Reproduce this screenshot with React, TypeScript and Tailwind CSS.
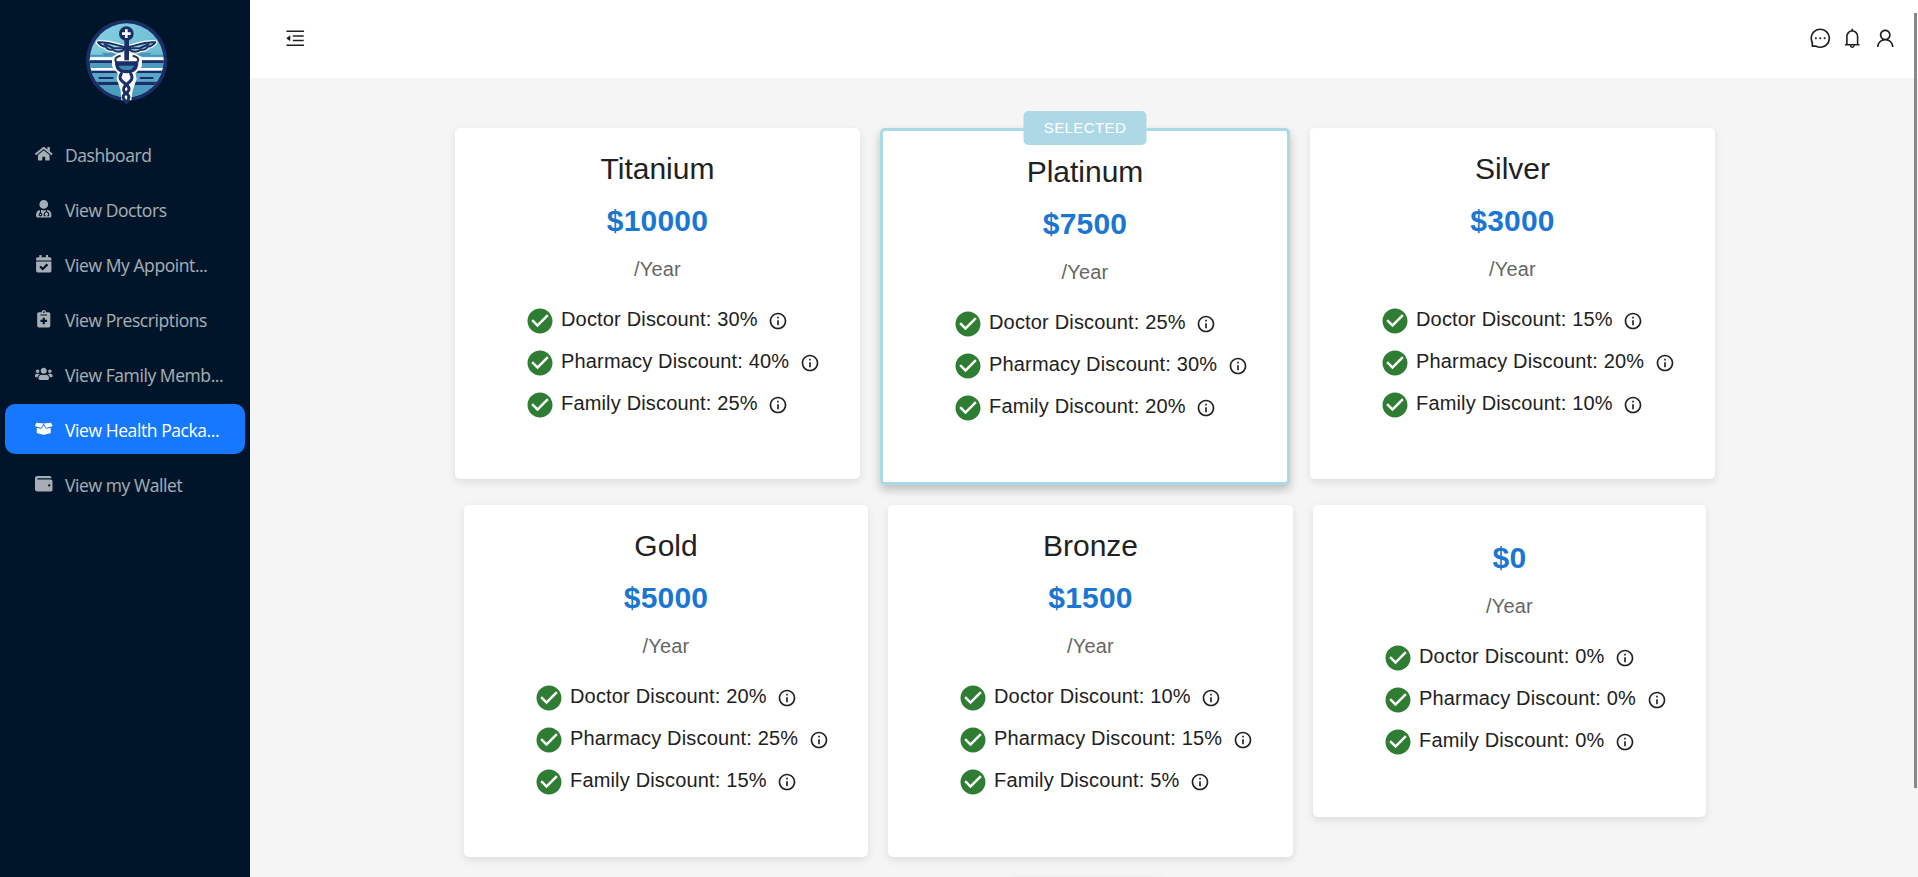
import React from "react";
import { AiOutlineBell, AiOutlineMenuFold, AiOutlineMessage, AiOutlineUser } from "react-icons/ai";
import { FaBoxOpen, FaCalendarCheck, FaHome, FaNotesMedical, FaUserMd, FaUsers, FaWallet } from "react-icons/fa";
import { MdCheckCircle, MdInfoOutline } from "react-icons/md";

type Plan = { name?: string; price: number; doctor: number; pharmacy: number; family: number; selected?: boolean; size: string };

const firstRow: Plan[] = [
  { name: "Titanium", price: 10000, doctor: 30, pharmacy: 40, family: 25, size: "w-[405px] h-[351px]" },
  { name: "Platinum", price: 7500, doctor: 25, pharmacy: 30, family: 20, selected: true, size: "w-[410px] h-[357px]" },
  { name: "Silver", price: 3000, doctor: 15, pharmacy: 20, family: 10, size: "w-[405px] h-[351px]" },
];

const secondRow: Plan[] = [
  { name: "Gold", price: 5000, doctor: 20, pharmacy: 25, family: 15, size: "w-[404px] h-[352px]" },
  { name: "Bronze", price: 1500, doctor: 10, pharmacy: 15, family: 5, size: "w-[405px] h-[352px]" },
  { price: 0, doctor: 0, pharmacy: 0, family: 0, size: "w-[393px] h-[312px]" },
];

const menu = [
  { label: "Dashboard", icon: FaHome },
  { label: "View Doctors", icon: FaUserMd },
  { label: "View My Appoint...", icon: FaCalendarCheck },
  { label: "View Prescriptions", icon: FaNotesMedical },
  { label: "View Family Memb...", icon: FaUsers },
  { label: "View Health Packa...", icon: FaBoxOpen, active: true },
  { label: "View my Wallet", icon: FaWallet },
];

function Logo() {
  return (
    <svg viewBox="75 50 252 264" className="h-[88px] w-[84px]">
      <defs>
        <clipPath id="disc"><circle cx="200" cy="180" r="111" /></clipPath>
        <linearGradient id="sky" x1="0" y1="0" x2="1" y2="1">
          <stop offset="0" stopColor="#86d3e2" />
          <stop offset="1" stopColor="#5fb0cc" />
        </linearGradient>
      </defs>
      <circle cx="200" cy="180" r="122" fill="#1b2f66" />
      <g clipPath="url(#disc)">
        <rect x="80" y="60" width="240" height="250" fill="url(#sky)" />
        <path d="M80 163h52l-8-6h60v12H80zM320 163h-52l8-6h-60v12h104z" fill="#4795b8" />
        <path d="M80 171h240v9H80z" fill="#fff" />
        <path d="M80 180h240v8H80z" fill="#1b2f66" />
        <path d="M80 188h240v15H80z" fill="#4b9cbf" />
        <path d="M80 203h240v8H80z" fill="#fff" />
        <path d="M80 211h240v8H80z" fill="#1b2f66" />
        <path d="M80 219h240v24H80z" fill="#58a9c8" />
        <path d="M118 233h40M242 233h36" stroke="#1b2f66" strokeWidth="6" strokeLinecap="round" />
        <path d="M80 244h240v10H80z" fill="#1b2f66" />
        <path d="M80 254h240v60H80z" fill="#4b9cbf" />
      </g>
      <path d="M184 300l-2-30-12-34 4-16-18-22 0-28 20-13h44l26 13 0 28-20 22 4 16-12 34-4 30z" fill="#fff" />
      <g fill="none" stroke="#fff" strokeLinecap="round" strokeLinejoin="round">
        <path d="M192 139c-22-2-36-16-78-13 8 10 14 13 24 13 2 7 10 10 20 9 8 8 24 8 34 0M208 139c22-2 36-16 78-13-8 10-14 13-24 13-2 7-10 10-20 9-8 8-24 8-34 0" strokeWidth="13" />
      </g>
      <g fill="#8ed5e3" stroke="#1b2f66" strokeWidth="6" strokeLinejoin="round">
        <path d="M192 139c-22-2-36-16-78-13 8 10 14 13 24 13 2 7 10 10 20 9 8 8 24 8 34 0z" />
        <path d="M208 139c22-2 36-16 78-13-8 10-14 13-24 13-2 7-10 10-20 9-8 8-24 8-34 0z" />
        <path d="M132 131l28 12 30 1M268 131l-28 12-30 1" fill="none" />
      </g>
      <path d="M200 118v62" stroke="#1b2f66" strokeWidth="14" />
      <circle cx="199" cy="100" r="22" fill="#1b2f66" />
      <path d="M199 87v26M186 100h26" stroke="#fff" strokeWidth="8" />
      <path d="M182 166c-22 4-18 20-8 20h52c12 0 14-16-8-20" fill="none" stroke="#1b2f66" strokeWidth="6" />
      <path d="M165 186h70c0 20-9 33-35 33s-35-13-35-33z" fill="#1b2f66" />
      <path d="M176 196h46c-4 10-10 13-22 13s-20-3-24-13z" fill="#3d86ad" />
      <g fill="none" stroke="#1b2f66" strokeWidth="9" strokeLinecap="round">
        <path d="M184 220c-12 18 8 26 18 36s4 18-6 24-8 14 2 26" />
        <path d="M212 220c12 18-6 26-16 36s-6 18 4 24 8 14 0 26" />
      </g>
    </svg>
  );
}

function Feature({ text }: { text: string }) {
  return (
    <li className="flex h-[42px] items-center">
      <MdCheckCircle className="size-[30px] shrink-0 text-[#2e7d32]" />
      <span className="pb-1 pl-[6px] text-[20px] leading-[30px] tracking-[0.17px] whitespace-nowrap">{text}</span>
      <MdInfoOutline className="ml-[10.5px] size-5 shrink-0" />
    </li>
  );
}

function PlanCard({ plan }: { plan: Plan }) {
  return (
    <article
      className={
        plan.size +
        " relative flex shrink-0 flex-col rounded-[5px] bg-white text-[#212121] " +
        (plan.selected
          ? "border-3 border-[#add8e6] shadow-[0_5px_10px_rgba(0,0,0,0.22)]"
          : "shadow-[0_3px_8px_rgba(0,0,0,0.1)]")
      }
    >
      {plan.selected && (
        <span className="absolute -top-5 left-1/2 flex h-[34px] w-[123px] -translate-x-1/2 items-center justify-center rounded-[5px] bg-[#add8e6] pt-px text-[15px] tracking-[0.4px] text-white">
          SELECTED
        </span>
      )}
      <div className="flex flex-col items-center pt-[21px]">
        {plan.name && <h2 className="text-[30px] leading-10">{plan.name}</h2>}
        <p className="mt-3 text-[30px] leading-10 font-bold tracking-[0.2px] text-[#1976d2]">${plan.price}</p>
        <p className="mt-[13px] text-[20px] leading-[30px] tracking-[0.19px] text-[#666666]">/Year</p>
      </div>
      <ul className="mt-4 pl-[70px]">
        <Feature text={`Doctor Discount: ${plan.doctor}%`} />
        <Feature text={`Pharmacy Discount: ${plan.pharmacy}%`} />
        <Feature text={`Family Discount: ${plan.family}%`} />
      </ul>
    </article>
  );
}

export default function App() {
  return (
    <div className="flex h-[877px] w-full overflow-hidden bg-[#f5f5f5] font-['Liberation_Sans',Arial,sans-serif]">
      <aside className="flex w-[250px] shrink-0 flex-col bg-[#001529]">
        <div className="flex h-[129px] justify-center pt-[17px] pl-1">
          <Logo />
        </div>
        <nav className="flex flex-col gap-[5px] px-[5px] font-['Open_Sans',sans-serif]">
          {menu.map(({ label, icon: Icon, active }) => (
            <a
              key={label}
              className={
                "flex h-[50px] items-center rounded-[10px] pl-[30px] text-[17.5px] " +
                (active ? "bg-[#1677ff] text-white" : "text-white/65")
              }
            >
              <Icon className="size-[17.5px] shrink-0" />
              <span className="pt-[3px] pl-[12.5px] tracking-[-0.42px] whitespace-nowrap">{label}</span>
            </a>
          ))}
        </nav>
      </aside>
      <div className="flex min-w-0 grow flex-col">
        <header className="flex h-[78px] shrink-0 items-start justify-between bg-white pt-[27px] pr-[22px] pl-[34px] text-black/88">
          <AiOutlineMenuFold className="size-[22.5px]" />
          <div className="flex gap-[10px]">
            <AiOutlineMessage className="size-[22.5px]" />
            <AiOutlineBell className="size-[22.5px]" />
            <AiOutlineUser className="size-[22.5px]" />
          </div>
        </header>
        <main className="flex grow flex-col gap-5 pt-[50px] pl-[2px]">
          <div className="flex items-start justify-center gap-5">
            {firstRow.map((p) => <PlanCard key={p.price} plan={p} />)}
          </div>
          <div className="flex items-start justify-center gap-5">
            {secondRow.map((p) => <PlanCard key={p.price} plan={p} />)}
          </div>
          <div className="mt-0.5 flex justify-center">
            <div className="h-10 w-[155px] shrink-0 rounded-[5px] shadow-[0_3px_10px_rgba(0,0,0,0.2)]" />
          </div>
        </main>
      </div>
      <div className="absolute top-[13px] right-[1px] h-[775px] w-[3px] bg-[#888888]" />
    </div>
  );
}
